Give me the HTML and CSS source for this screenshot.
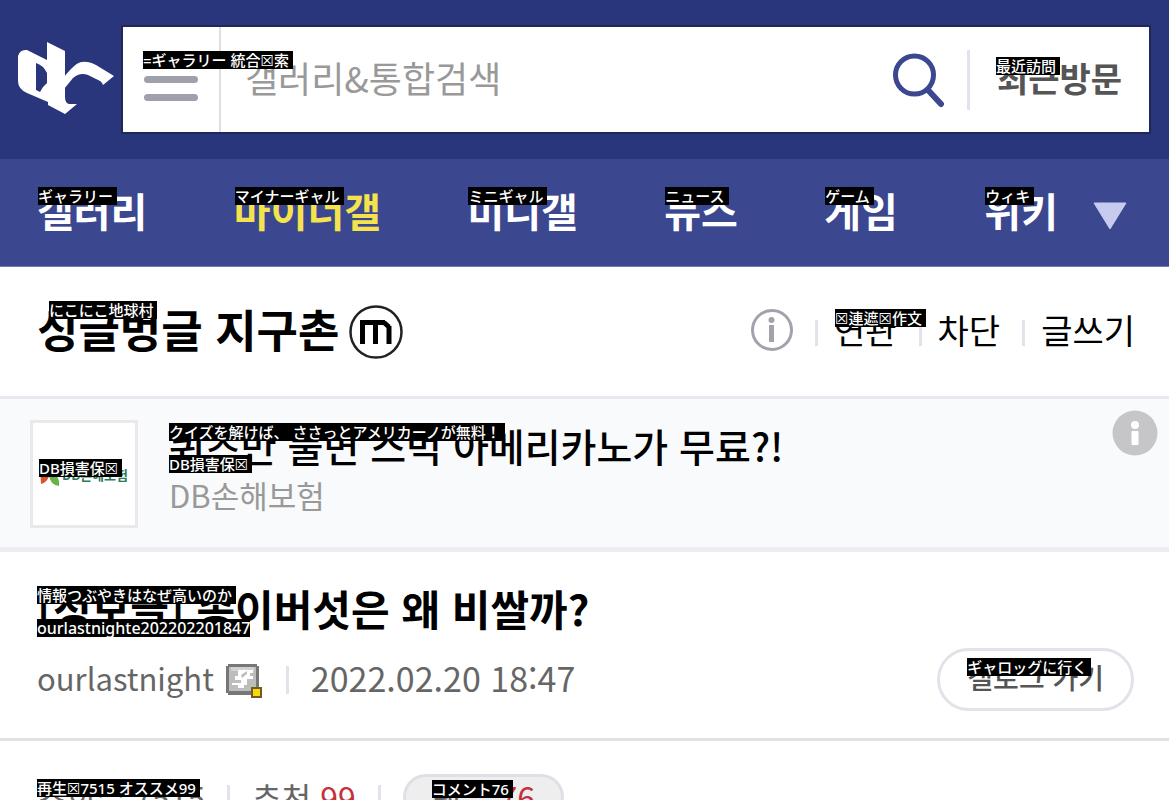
FILE: index.html
```html
<!DOCTYPE html>
<html lang="ko">
<head>
<meta charset="UTF-8" />
<meta name="viewport" content="width=device-width, initial-scale=1" />
<title>싱글벙글 지구촌</title>
<link rel="stylesheet" href="styles.css">
</head>
<body>
  <header class="top">
    <a href="#" class="logo" aria-label="dc">
      <svg width="96" height="78" viewBox="0 0 96 78" fill="#fff">
        <path fill-rule="evenodd" d="M0 15 Q2 8 9 9 L29 19 V1 L47 10 V56 Q47 62 51 63 L59 63 L47 73 L30 64 V61 L9 52 Q0 48 0 40 Z M18 22 V49 L22 51 Q24 46 29 42 V32 Q25 24 18 22 Z"/>
        <path d="M46 36 Q58 21 64 21 Q70 20 78 24 L96 35 L85 44 Q84 40 78 38 L70 34 Q62 31 55 37 L46 48 Z"/>
      </svg>
    </a>
    <form class="search">
      <button type="button" class="menu-btn" aria-label="메뉴">
        <span></span><span></span><span></span>
      </button>
      <label class="tag search-tag" for="q">=ギャラリー 統合☒索</label>
      <input id="q" type="text" placeholder="갤러리&amp;통합검색">
      <button type="submit" class="search-btn" aria-label="검색">
        <svg width="54" height="56" viewBox="0 0 54 56" fill="none" stroke="#3b4890">
          <circle cx="22.500" cy="23" r="19" stroke-width="5"/>
          <path d="M36 38 L49 52" stroke-width="6" stroke-linecap="round"/>
        </svg>
      </button>
      <a href="#" class="recent">최근방문<span class="tag">最近訪問</span></a>
    </form>
  </header>
  <nav class="gnb">
    <ul>
      <li><a href="#">갤러리<span class="tag">ギャラリー</span></a></li>
      <li><a href="#" class="on">마이너갤<span class="tag">マイナーギャル</span></a></li>
      <li><a href="#">미니갤<span class="tag">ミニギャル</span></a></li>
      <li><a href="#">뉴스<span class="tag">ニュース</span></a></li>
      <li><a href="#">게임<span class="tag">ゲーム</span></a></li>
      <li><a href="#">위키<span class="tag">ウィキ</span></a></li>
    </ul>
    <button type="button" class="more-btn" aria-label="더보기">
      <svg width="34" height="28" viewBox="0 0 34 28"><path d="M1 1 H33 L17 27 Z" fill="#c7cbf0" stroke="#c7cbf0" stroke-linejoin="round"/></svg>
    </button>
  </nav>
  <main>
    <section class="gall-head">
      <h1>싱글벙글 지구촌<span class="tag">にこにこ地球村</span></h1>
      <svg class="minor" width="54" height="54" viewBox="0 0 54 54" fill="none" stroke="#222">
        <circle cx="27" cy="27" r="25.500" stroke-width="2.500"/>
        <path d="M13.500 39 V17.500 H36 M26.500 17 V39 M40 39 V21 M35 17.500 L40 22" stroke="#000" stroke-width="5"/>
      </svg>
      <div class="gall-menu">
        <button type="button" class="info-btn" aria-label="정보">
          <svg width="42" height="42" viewBox="0 0 42 42" fill="#a2a2ac">
            <circle cx="21" cy="21" r="19.500" fill="none" stroke="#a2a2ac" stroke-width="3"/>
            <circle cx="20.500" cy="11" r="3"/>
            <rect x="18" y="16" width="5" height="17"/>
          </svg>
        </button>
        <a href="#">연관<span class="tag">☒連遮☒作文</span></a>
        <a href="#">차단</a>
        <a href="#">글쓰기</a>
      </div>
    </section>
    <section class="ad">
      <a href="#" class="ad-thumb">
        <svg width="90" height="24" viewBox="0 0 90 24">
          <path d="M1 6 H11 Q11 20 2 22 Z" fill="#d9532c"/>
          <path d="M11 9 Q21 12 20 24 Q11 23 10 13 Z" fill="#67b346"/>
          <text x="23" y="18" class="ad-logo">DB손해보험</text>
        </svg>
        <span class="tag">DB損害保☒</span>
      </a>
      <div class="ad-text">
        <a href="#" class="ad-title">퀴즈만 풀면 스벅 아메리카노가 무료?!<span class="tag">クイズを解けば、 ささっとアメリカーノが無料！</span></a>
        <p class="ad-name">DB손해보험<span class="tag">DB損害保☒</span></p>
      </div>
      <button type="button" class="ad-info" aria-label="광고 정보">
        <svg width="46" height="46" viewBox="0 0 46 46" fill="#fff">
          <circle cx="23" cy="23" r="22.500" fill="#c6c6c8"/>
          <circle cx="23" cy="15" r="4"/>
          <rect x="19.500" y="21" width="7" height="14" rx="1"/>
        </svg>
      </button>
    </section>
    <article>
      <div class="post-head">
        <h2>[정보글] 송이버섯은 왜 비쌀까?<span class="tag">情報つぶやきはなぜ高いのか</span></h2>
        <div class="post-info">
          <span class="nick">ourlastnight<span class="tag">ourlastnighte202202201847</span></span>
          <svg class="nick-icon" width="36" height="34" viewBox="0 0 36 34">
            <path d="M2 0 H31 V2 H33 V29 H30 V31 H2 V29 H0 V2 H2 Z" fill="#777"/>
            <rect x="3" y="3" width="27" height="24" fill="#bdbdbd"/>
            <rect x="5" y="3" width="23" height="4" fill="#d2d2d2"/>
            <path d="M12 6 H27 V9 H24 V12 H27 V15 H21 V21 H18 V24 H12 V21 H6 V19 H15 V16 H9 V12 H12 Z" fill="#fff"/>
            <path d="M15 11 L21 7 V10 L16 14 Z" fill="#bdbdbd"/>
            <rect x="26" y="24" width="9" height="9" fill="#f8d80c" stroke="#705c20" stroke-width="2"/>
          </svg>
          <time datetime="2022-02-20T18:47">2022.02.20 18:47</time>
          <a href="#" class="gallog">갤로그 가기<span class="tag">ギャロッグに行く</span></a>
        </div>
      </div>
      <div class="post-stats">
        <span class="stat">조회수 7515<span class="tag">再生☒7515 オススメ99</span></span>
        <span class="stat">추천 <em>99</em></span>
        <a href="#" class="reply">댓글 <em>76</em><span class="tag">コメント76</span></a>
      </div>
    </article>
  </main>
</body>
</html>
```

FILE: styles.css
```css
* {
  box-sizing: border-box;
}
body {
  margin: 0;
  font-family: "Noto Sans CJK KR", sans-serif;
  background-color: #fff;
  color: #000;
}
a {
  color: inherit;
  text-decoration: none;
}
button {
  padding: 0;
  border: none;
  background: none;
  cursor: pointer;
}
svg {
  display: block;
}
h1, h2, p, ul {
  margin: 0;
  padding: 0;
}
em {
  font-style: normal;
  color: #c4313b;
}

/* translated captions over the original words */
.tag {
  position: absolute;
  left: 0;
  top: 0;
  z-index: 1;
  padding-right: 4px;
  background-color: #000;
  color: #fff;
  font-family: "Noto Sans", "Noto Sans CJK JP", "DejaVu Sans", sans-serif;
  font-size: 15px;
  font-weight: 500;
  line-height: 18px;
  white-space: nowrap;
}

/* Header */
.top {
  display: flex;
  align-items: center;
  gap: 7px;
  padding: 25px 18px;
  background-color: #29367c;
}
.search {
  position: relative;
  flex: 1;
  display: flex;
  align-items: center;
  height: 109px;
  border: 2px solid #20285a;
  background-color: #fff;
}
.menu-btn {
  display: flex;
  flex-direction: column;
  justify-content: center;
  gap: 11px;
  height: 100%;
  padding: 0 21px;
  border-right: 2px solid #dedee6;
}
.menu-btn span {
  width: 54px;
  height: 7px;
  border-radius: 4px;
  background-color: #a0a0ac;
}
.search-tag {
  left: 20px;
  top: 24px;
}
.search input {
  flex: 1;
  min-width: 0;
  height: 100%;
  padding: 0 24px 6px;
  border: none;
  outline: none;
  background: none;
  font-family: inherit;
  font-size: 36px;
}
.search input::placeholder {
  color: #999;
  opacity: 1;
}
.recent {
  position: relative;
  margin-left: 21px;
  padding: 0 27px 4px;
  border-left: 3px solid #e2e2ea;
  color: #555;
  font-size: 34px;
  font-weight: 700;
  line-height: 56px;
}
.recent .tag {
  left: 26px;
  top: 7px;
}

/* Navigation */
.gnb {
  display: flex;
  align-items: center;
  gap: 35px;
  padding: 0 42px 0 37px;
  border-bottom: 1px solid #777c9c;
  background-color: #3b478f;
  color: #fff;
}
.gnb ul {
  flex: 1;
  display: flex;
  justify-content: space-between;
  list-style: none;
}
.gnb li a {
  position: relative;
  display: block;
  padding-bottom: 4px;
  font-size: 40px;
  font-weight: 700;
  line-height: 103px;
}
.gnb .on {
  color: #f5e34d;
}
.gnb .tag {
  left: 1px;
  top: 28px;
}
.more-btn {
  padding-top: 6px;
}

/* Gallery title */
.gall-head {
  display: flex;
  align-items: center;
  gap: 10px;
  padding: 0 34px 0 37px;
  border-bottom: 3px solid #e8e8f0;
}
.gall-head h1 {
  position: relative;
  padding-bottom: 5px;
  font-size: 45px;
  font-weight: 700;
  line-height: 124px;
}
.gall-head h1 .tag {
  left: 12px;
  top: 34px;
}
.gall-menu {
  display: flex;
  align-items: center;
  gap: 22px;
  margin-left: auto;
  padding-bottom: 4px;
}
.gall-menu a {
  position: relative;
  padding-left: 19px;
  font-size: 34px;
  line-height: 36px;
}
.gall-menu a::before {
  content: "";
  position: absolute;
  left: 0;
  top: 8px;
  width: 3px;
  height: 26px;
  background-color: #e2e2ea;
}
.gall-menu .tag {
  left: 20px;
  top: -3px;
}

/* Sponsored row */
.ad {
  display: flex;
  align-items: flex-start;
  gap: 31px;
  padding: 21px 11px 19px 30px;
  border-bottom: 5px solid #ececf1;
  background-color: #f9fafc;
}
.ad-thumb {
  position: relative;
  display: flex;
  align-items: center;
  justify-content: center;
  width: 108px;
  height: 108px;
  border: 3px solid #e9e9eb;
  background-color: #fff;
}
.ad-thumb .tag {
  left: 6px;
  top: 36px;
}
.ad-logo {
  fill: #2d7a57;
  font-size: 13px;
  font-weight: 700;
}
.ad-text {
  flex: 1;
}
.ad-title {
  position: relative;
  display: block;
  font-size: 39px;
  font-weight: 500;
  line-height: 50px;
}
.ad-title .tag {
  top: 3px;
}
.ad-name {
  position: relative;
  color: #999;
  font-size: 31px;
  line-height: 50px;
}
.ad-name .tag {
  top: -15px;
}
.ad-info {
  margin-top: -10px;
}

/* Post */
.post-head {
  padding: 26px 35px 27px 37px;
  border-bottom: 3px solid #e2e2e6;
}
.post-head h2 {
  position: relative;
  padding-bottom: 4px;
  font-size: 42px;
  font-weight: 700;
  line-height: 60px;
}
.post-head h2 .tag {
  top: 8px;
}
.post-info {
  display: flex;
  align-items: center;
  margin-top: 6px;
  color: #666;
}
.nick {
  position: relative;
  padding-bottom: 4px;
  font-size: 31px;
  line-height: 42px;
}
.nick .tag {
  top: -38px;
  padding-right: 0;
  font-size: 16px;
}
.nick-icon {
  margin: 2px 24px 0 12px;
}
time {
  padding: 0 0 4px 22px;
  border-left: 3px solid #e2e2ea;
  font-size: 34px;
  line-height: 24px;
}
.gallog {
  position: relative;
  margin-left: auto;
  padding: 0 27px 4px;
  border: 3px solid #e2e2ea;
  border-radius: 32px;
  color: #555;
  font-size: 28px;
  font-weight: 500;
  line-height: 53px;
}
.gallog .tag {
  left: 27px;
  top: 7px;
}
.post-stats {
  display: flex;
  align-items: center;
  gap: 22px;
  padding: 33px 37px;
  color: #666;
  font-size: 32px;
}
.stat {
  position: relative;
  padding-right: 22px;
  border-right: 3px solid #e2e2ea;
  line-height: 24px;
}
.stat .tag {
  top: -6px;
}
.reply {
  position: relative;
  padding: 0 26px;
  border: 3px solid #dfdfe6;
  border-radius: 32px;
  background-color: #eee;
  line-height: 40px;
}
.reply .tag {
  left: 26px;
  top: 3px;
}
```
